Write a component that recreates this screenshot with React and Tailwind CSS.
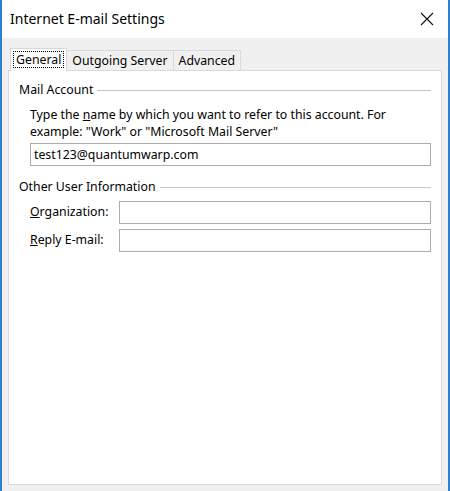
import React from 'react';

const font = { fontFamily: '"Segoe UI", "Noto Sans", "Open Sans", sans-serif' };

const GroupTitle = ({ children }) => (
  <div className="flex items-center gap-[4px] h-[16px]">
    <span className="text-[12.3px] text-[#000] leading-[16px] whitespace-nowrap">{children}</span>
    <div className="flex-1 h-[1px] bg-[#c7c7c7]" />
  </div>
);

const TextBox = ({ value, className = '' }) => (
  <div className={`h-[23px] border border-[#acacac] bg-white flex items-center px-[3px] text-[12.3px] ${className}`}>
    {value}
  </div>
);

const App = () => {
  return (
    <div className="w-[450px] h-[491px] bg-[#f0f0f0] border-x-2 border-[#2b7fd0] flex flex-col text-black" style={font}>
      <div className="h-[38px] bg-white flex items-center justify-between pl-[8px] pr-[14px]">
        <span className="text-[14px] leading-[20px]">Internet E-mail Settings</span>
        <svg width="14" height="14" viewBox="0 0 14 14">
          <path d="M1 1 L13 13 M13 1 L1 13" stroke="#111" strokeWidth="1.1" />
        </svg>
      </div>

      <div className="flex-1 flex flex-col px-[6px] pt-[9px] pb-[6px]">
        <div className="flex items-end h-[23px] pl-[2px] text-[12.3px]">
          <div className="h-[23px] px-[2px] pt-[2px] bg-white border border-b-0 border-[#d9d9d9] relative top-[1px] z-10">
            <div className="border border-dotted border-black px-[2px] leading-[15px]">General</div>
          </div>
          <div className="h-[20px] px-[5px] bg-[#f0f0f0] border border-l-0 border-b-0 border-[#d9d9d9] leading-[19px]">Outgoing Server</div>
          <div className="h-[20px] px-[5px] bg-[#f0f0f0] border border-l-0 border-b-0 border-[#d9d9d9] leading-[19px]">Advanced</div>
        </div>
        <div className="flex-1 bg-white border border-[#d9d9d9] px-[10px] pt-[11px] flex flex-col">
          <GroupTitle>Mail Account</GroupTitle>
          <div className="pl-[11px] pt-[8px] text-[12.3px] leading-[17px]">
            <p>Type the <span className="underline">n</span>ame by which you want to refer to this account. For</p>
            <p>example: "Work" or "Microsoft Mail Server"</p>
            <TextBox value="test123@quantumwarp.com" className="mt-[3px]" />
          </div>
          <div className="mt-[13px]">
            <GroupTitle>Other User Information</GroupTitle>
          </div>
          <div className="pl-[11px] pt-[6px] flex flex-col gap-[5px] text-[12.3px]">
            <div className="flex items-center">
              <span className="w-[89px]"><span className="underline">O</span>rganization:</span>
              <TextBox value="" className="flex-1" />
            </div>
            <div className="flex items-center">
              <span className="w-[89px]"><span className="underline">R</span>eply E-mail:</span>
              <TextBox value="" className="flex-1" />
            </div>
          </div>
        </div>
      </div>
    </div>
  );
};

export default App;
